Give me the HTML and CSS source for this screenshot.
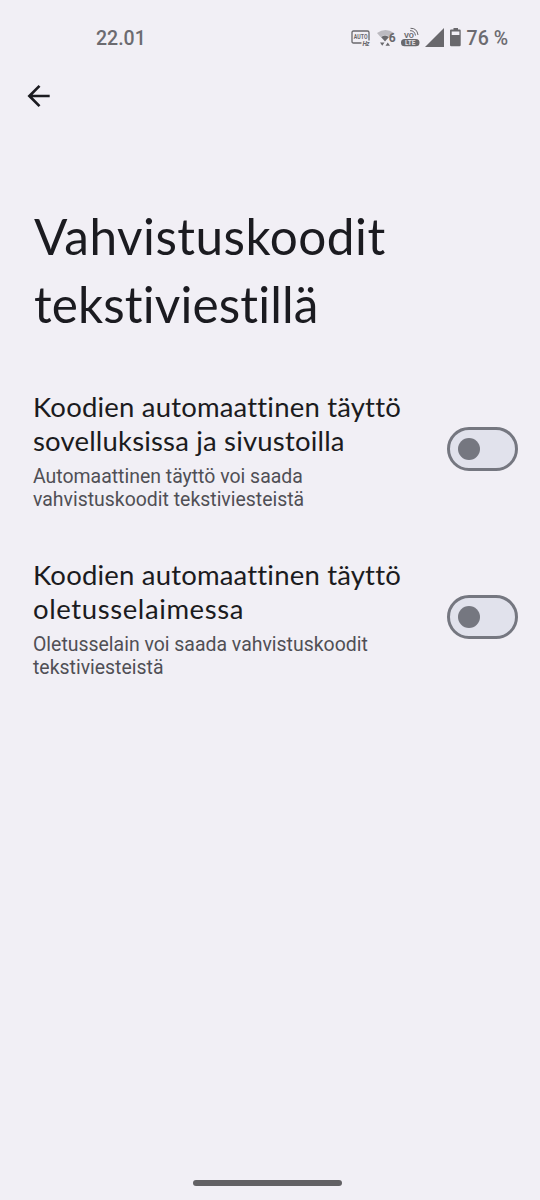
FILE: index.html
```html
<!DOCTYPE html>
<html lang="fi">
<head>
<meta charset="utf-8">
<title>Vahvistuskoodit tekstiviestillä</title>
<link rel="stylesheet" href="styles.css">
</head>
<body>
<div class="screen">
  <header class="status">
    <span class="clock">22.01</span>
    <svg class="status-icons" width="117" height="28" viewBox="0 0 117 28">
      <g class="ink">
        <path d="M12.500 19H4.500Q3 19 3 17.500V8.500Q3 7 4.500 7H18.500Q20 7 20 8.500V16.500" fill="none" stroke="#69686c" stroke-width="1.300"/>
        <text x="4.800" y="15.200" class="tiny" textLength="13.700" lengthAdjust="spacingAndGlyphs">AUTO</text>
        <text x="13.500" y="21.500" class="tiny slanted" textLength="7">Hz</text>
        <path d="M28 9Q36.500 3 45 9L41 13.500Q36.500 9.500 31.500 13Z" fill="#bcbac0"/>
        <path d="M32 13Q36 10 40 13L36 17.500Z"/>
        <path d="M31 18.500h4.500l-2.250 3.300zM36.500 21.800h4.500l-2.250-3.300z"/>
        <text x="39.800" y="18" class="six">6</text>
        <text x="55" y="14" class="vo" textLength="10" lengthAdjust="spacingAndGlyphs">VO</text>
        <path d="M61 6.700Q65.500 6.300 66.500 11.500M61.500 4.300Q68 4 69 11" fill="none" stroke="#69686c"/>
        <rect x="52" y="15" width="18.500" height="7.300" rx="3.600"/>
        <text x="56" y="21" class="lte" textLength="10.500" lengthAdjust="spacingAndGlyphs">LTE</text>
        <path d="M76 23L95 4V23Z"/>
        <path d="M104.500 4h4.500v1.500h1.700q1 0 1 1V21q0 1.200-1.200 1.200h-8.300q-1.200 0-1.200-1.200V6.500q0-1 1-1h2.500zM102.700 7.500v3.500h7.700V7.500z" fill-rule="evenodd"/>
      </g>
    </svg>
    <span class="charge">76 %</span>
  </header>
  <nav class="toolbar">
    <svg class="back" width="24" height="24" viewBox="0 0 24 24"><path d="M22.700 12H2.500M12.500 1.900L2.400 12L12.500 22.100"/></svg>
  </nav>
  <h1 class="title"><span class="t1">Vahvistuskoodit</span><span class="t2">tekstiviestillä</span></h1>
  <main class="settings">
    <section class="row">
      <div class="copy">
        <h2><span class="a1">Koodien automaattinen täyttö</span><span class="a2">sovelluksissa ja sivustoilla</span></h2>
        <p>Automaattinen täyttö voi saada<br>vahvistuskoodit tekstiviesteistä</p>
      </div>
      <div class="switch" role="switch" aria-checked="false"><i class="thumb"></i></div>
    </section>
    <section class="row">
      <div class="copy">
        <h2><span class="a1">Koodien automaattinen täyttö</span><span class="a3">oletusselaimessa</span></h2>
        <p>Oletusselain voi saada vahvistuskoodit<br>tekstiviesteistä</p>
      </div>
      <div class="switch" role="switch" aria-checked="false"><i class="thumb"></i></div>
    </section>
  </main>
  <footer class="gesture"><div class="handle"></div></footer>
</div>
</body>
</html>
```
FILE: styles.css
```css
* { box-sizing: border-box; }
body { margin: 0; background: #f1eff5; }
.screen { width: 540px; height: 1200px; display: flex; flex-direction: column; font-family: Roboto, sans-serif; color: #1b1b20; }
.status { height: 76px; display: flex; align-items: center; padding-left: 96px; color: #6c6b70; font-size: 19.500px; font-weight: 500; white-space: nowrap; }
.clock { width: 253px; }
.status-icons { flex: none; }
.ink { fill: #69686c; }
.tiny { font: bold 6.500px Roboto, sans-serif; }
.slanted { font-style: italic; }
.six { font: bold 12px Roboto, sans-serif; }
.vo { font: bold 8px Roboto, sans-serif; }
.lte { font: bold 6.500px Roboto, sans-serif; fill: #e2e0e6; }
.charge { padding-left: 0.500px; letter-spacing: 0.1px; }
.toolbar { height: 40px; padding: 7.500px 0 0 26.500px; }
.back { display: block; fill: none; stroke: #1b1b20; stroke-width: 2.700; }
.title { margin: 86px 0 0 34px; font: 400 49.500px/68px Lato, sans-serif; font-variant-ligatures: none; }
.title span, h2 span { display: block; width: max-content; }
.t1 { letter-spacing: 0.480px; }
.t2 { letter-spacing: 0.130px; }
.settings { margin-top: 52px; }
.row { height: 168px; display: flex; justify-content: space-between; padding: 0 22px 0 33px; }
h2 { margin: 0; font: 400 27.500px/34px Lato, sans-serif; font-variant-ligatures: none; white-space: nowrap; }
.a1 { letter-spacing: 0.190px; }
.a2 { letter-spacing: 0.180px; }
.a3 { letter-spacing: 0.600px; }
p { margin: 7px 0 0; font-size: 19.450px; line-height: 23px; color: #504f55; white-space: nowrap; }
.switch { width: 71.500px; height: 44px; margin-top: 37px; border: 3px solid #757780; border-radius: 22px; background: #e1e2ec; display: flex; align-items: center; padding-left: 8px; }
.thumb { width: 22px; height: 22px; border-radius: 50%; background: #757780; }
.gesture { margin-top: auto; height: 20px; display: flex; justify-content: center; padding-right: 6px; }
.handle { width: 149px; height: 6px; border-radius: 3px; background: #626164; }
```
